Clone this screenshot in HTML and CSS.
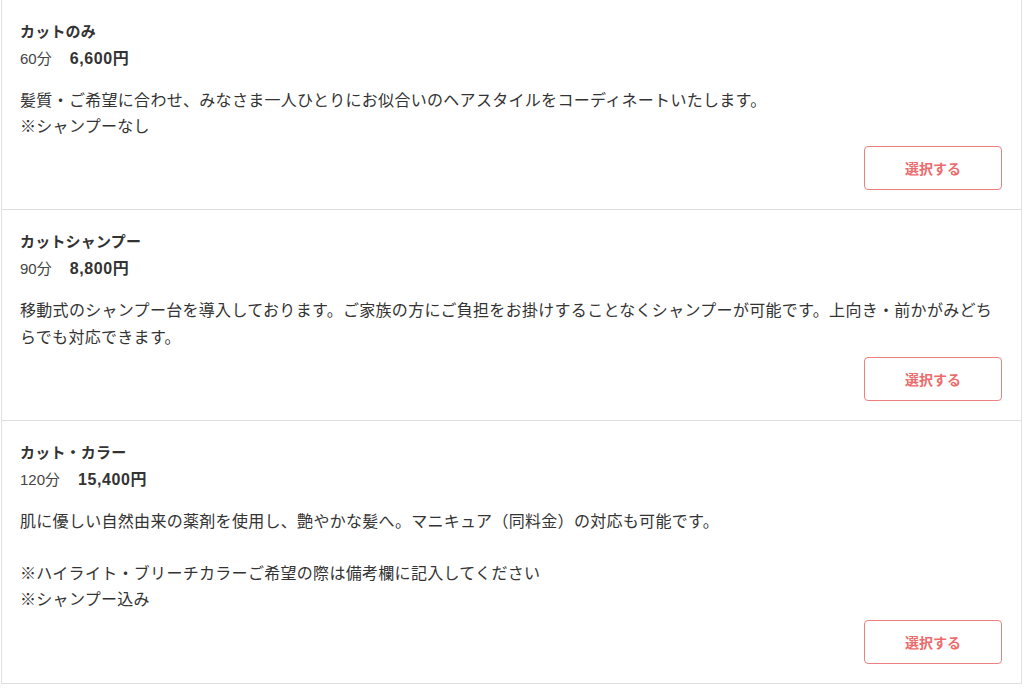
FILE: index.html
```html
<!DOCTYPE html>
<html lang="ja">
<head>
<meta charset="utf-8">
<title>メニュー</title>
<link rel="stylesheet" href="styles.css">
</head>
<body>
<div class="menu-list">
  <section class="menu-item">
    <h3 class="menu-name">カットのみ</h3>
    <p class="menu-meta"><span class="menu-time">60分</span><span class="menu-price">6,600円</span></p>
    <p class="menu-desc">髪質・ご希望に合わせ、みなさま一人ひとりにお似合いのヘアスタイルをコーディネートいたします。<br>※シャンプーなし</p>
    <div class="menu-actions"><button class="select-btn" type="button">選択する</button></div>
  </section>
  <section class="menu-item">
    <h3 class="menu-name">カットシャンプー</h3>
    <p class="menu-meta"><span class="menu-time">90分</span><span class="menu-price">8,800円</span></p>
    <p class="menu-desc">移動式のシャンプー台を導入しております。ご家族の方にご負担をお掛けすることなくシャンプーが可能です。上向き・前かがみどちらでも対応できます。</p>
    <div class="menu-actions"><button class="select-btn" type="button">選択する</button></div>
  </section>
  <section class="menu-item">
    <h3 class="menu-name">カット・カラー</h3>
    <p class="menu-meta"><span class="menu-time">120分</span><span class="menu-price">15,400円</span></p>
    <p class="menu-desc">肌に優しい自然由来の薬剤を使用し、艶やかな髪へ。マニキュア（同料金）の対応も可能です。<br><br>※ハイライト・ブリーチカラーご希望の際は備考欄に記入してください<br>※シャンプー込み</p>
    <div class="menu-actions"><button class="select-btn" type="button">選択する</button></div>
  </section>
</div>
</body>
</html>
```
FILE: styles.css
```css
html, body {
  margin: 0;
  padding: 0;
  background: #ffffff;
}

body {
  font-family: "Liberation Sans", "Noto Sans CJK JP", sans-serif;
  color: #333333;
}

.menu-list {
  margin: 0 2px 0 1px;
  border-left: 1px solid #e2e2e2;
  border-right: 1px solid #e2e2e2;
}

.menu-item {
  padding: 20px 19px 19px 18px;
  border-bottom: 1px solid #dedede;
}

.menu-name {
  margin: 0;
  font-size: 15px;
  line-height: 24px;
  font-weight: bold;
  letter-spacing: 0.2px;
  color: #333333;
}

.menu-meta {
  margin: 2px 0 0;
  line-height: 26px;
  display: flex;
  align-items: baseline;
}

.menu-time {
  font-size: 15px;
  color: #444444;
}

.menu-price {
  margin-left: 18px;
  font-size: 16px;
  font-weight: bold;
  letter-spacing: 0.6px;
  color: #333333;
}

.menu-desc {
  margin: 16px 0 0;
  font-size: 16px;
  line-height: 26.2px;
  letter-spacing: 0.3px;
  color: #333333;
}

.menu-actions {
  margin-top: 6px;
  display: flex;
  justify-content: flex-end;
}

.select-btn {
  width: 138px;
  height: 44px;
  background: #ffffff;
  border: 1px solid #ef8080;
  border-radius: 4px;
  color: #ec6b6b;
  font-family: "Liberation Sans", "Noto Sans CJK JP", sans-serif;
  font-size: 14px;
  font-weight: bold;
  cursor: pointer;
}
```
